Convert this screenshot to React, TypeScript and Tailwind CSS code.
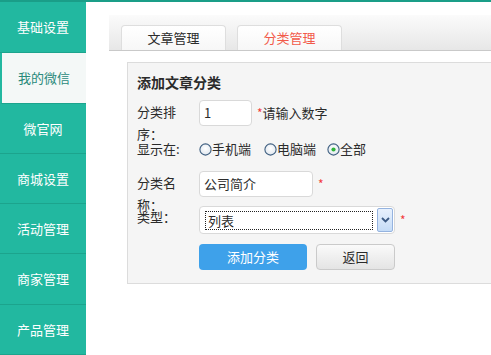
import React from "react";

const FONT = { fontFamily: '"Noto Sans CJK SC", "Noto Sans", sans-serif' };

const items: { t: string; h: string; active?: boolean }[] = [
  { t: "基础设置", h: "h-[50px]" },
  { t: "我的微信", h: "h-[50px]", active: true },
  { t: "微官网", h: "h-[49px]" },
  { t: "商城设置", h: "h-[49px]" },
  { t: "活动管理", h: "h-[49px]" },
  { t: "商家管理", h: "h-[50px]" },
  { t: "产品管理", h: "h-[49px]" },
];

function Radio({ checked }: { checked?: boolean }) {
  return (
    <svg width="13" height="13" viewBox="0 0 13 13" className="shrink-0">
      <defs>
        <radialGradient id={checked ? "rgc" : "rg"} cx="50%" cy="40%" r="60%">
          <stop offset="0%" stopColor="#ffffff" />
          <stop offset="100%" stopColor="#dfe6ee" />
        </radialGradient>
      </defs>
      <circle cx="6.5" cy="6.5" r="5.6" fill={`url(#${checked ? "rgc" : "rg"})`} stroke="#3f5f80" strokeWidth="1.1" />
      {checked && <circle cx="6.5" cy="6.5" r="2.1" fill="#2fb33a" />}
    </svg>
  );
}

function Star() {
  return <span className="text-[#f23b3b] text-[12px]">*</span>;
}

export default function App() {
  return (
    <div className="w-[491px] h-[355px] overflow-hidden bg-white text-[#2b2b2b]" style={FONT}>
      <div className="h-[2px] bg-[#1a9e88]" />
      <div className="flex h-[353px]">
        <div className="w-[86px] shrink-0 bg-[#22b8a0] flex flex-col">
          {items.map((it) => (
            <div
              key={it.t}
              className={`${it.h} shrink-0 box-content border-b border-[#1ca48d] flex items-center justify-center text-[13px] ${
                it.active ? "bg-[#f4f8f7] text-[#2a8a7b] border-l-2 border-l-[#22b8a0]" : "text-white"
              }`}
            >
              {it.t}
            </div>
          ))}
        </div>
        <div className="flex-1 pt-[13px] pl-[23px]">
          <div className="h-[36px] border-b border-[#c9c9c9] bg-gradient-to-b from-[#fbfbfb] to-[#e7e7e7] flex items-end pl-[12px] gap-[11px]">
            <div className="w-[105px] h-[25px] rounded-t-[4px] border border-b-0 border-[#dedede] bg-gradient-to-b from-white to-[#f7f7f7] flex items-center justify-center text-[13px] text-[#2b2b2b]">
              文章管理
            </div>
            <div className="w-[105px] h-[25px] rounded-t-[4px] border border-b-0 border-[#dedede] bg-gradient-to-b from-white to-[#f7f7f7] flex items-center justify-center text-[13px] text-[#f25a4a]">
              分类管理
            </div>
          </div>
          <div className="mt-[11px] ml-[18px] border-l border-t border-b border-[#dcdcdc] bg-[#f5f5f5] pl-[9px] pt-[9px] pb-[13px]">
            <div className="text-[14px] font-bold leading-[20px] text-[#2b2b2b]">添加文章分类</div>

            <div className="flex mt-[8px] h-[26px] text-[13px]">
              <div className="w-[48px] mr-[14px] h-[26px] pt-[1px] leading-[22px] shrink-0">分类排序：</div>
              <div className="w-[53px] h-[26px] border border-[#d9d9d9] rounded-[4px] bg-white pl-[4px] leading-[24px]">1</div>
              <div className="ml-[5px] leading-[26px]">
                <Star />
                请输入数字
              </div>
            </div>

            <div className="flex items-center mt-[13px] h-[20px] text-[13px]">
              <div className="w-[48px] mr-[14px] leading-[20px] shrink-0">显示在:</div>
              <Radio />
              <span className="mr-[13px]">手机端</span>
              <Radio />
              <span className="mr-[11px]">电脑端</span>
              <Radio checked />
              <span>全部</span>
            </div>

            <div className="flex mt-[12px] h-[26px] text-[13px]">
              <div className="w-[48px] mr-[14px] h-[26px] pt-[1px] leading-[22px] shrink-0">分类名称：</div>
              <div className="w-[114px] h-[26px] border border-[#d9d9d9] rounded-[4px] bg-white pl-[4px] leading-[24px]">公司简介</div>
              <div className="ml-[5px] leading-[26px]">
                <Star />
              </div>
            </div>

            <div className="flex mt-[9px] h-[28px] text-[13px]">
              <div className="w-[48px] mr-[14px] h-[28px] pt-[1px] leading-[20px] shrink-0">类型：</div>
              <div className="w-[196px] h-[28px] border border-[#d9d9d9] rounded-[4px] bg-white flex items-center pl-[5px] pr-[1px]">
                <div className="w-[170px] h-[19px] border border-dotted border-[#222] pl-[2px] leading-[17px]">列表</div>
                <div className="ml-[4px] w-[16px] h-[24px] border border-[#95b3df] rounded-[2px] bg-gradient-to-b from-[#e8f1fd] to-[#c5dcf7] flex items-center justify-center">
                  <svg width="9" height="6" viewBox="0 0 9 6">
                    <path d="M1 1 L4.5 4.5 L8 1" fill="none" stroke="#3c5a84" strokeWidth="1.8" />
                  </svg>
                </div>
              </div>
              <div className="ml-[5px] leading-[28px]">
                <Star />
              </div>
            </div>

            <div className="flex mt-[10px] h-[26px] text-[13px] pl-[62px] gap-[9px]">
              <div className="w-[108px] h-[26px] rounded-[4px] bg-[#3ea1ea] text-white flex items-center justify-center">添加分类</div>
              <div className="w-[79px] h-[26px] rounded-[4px] border border-[#cacaca] bg-gradient-to-b from-[#fafafa] to-[#e4e4e4] text-[#2b2b2b] flex items-center justify-center">
                返回
              </div>
            </div>
          </div>
        </div>
      </div>
    </div>
  );
}
